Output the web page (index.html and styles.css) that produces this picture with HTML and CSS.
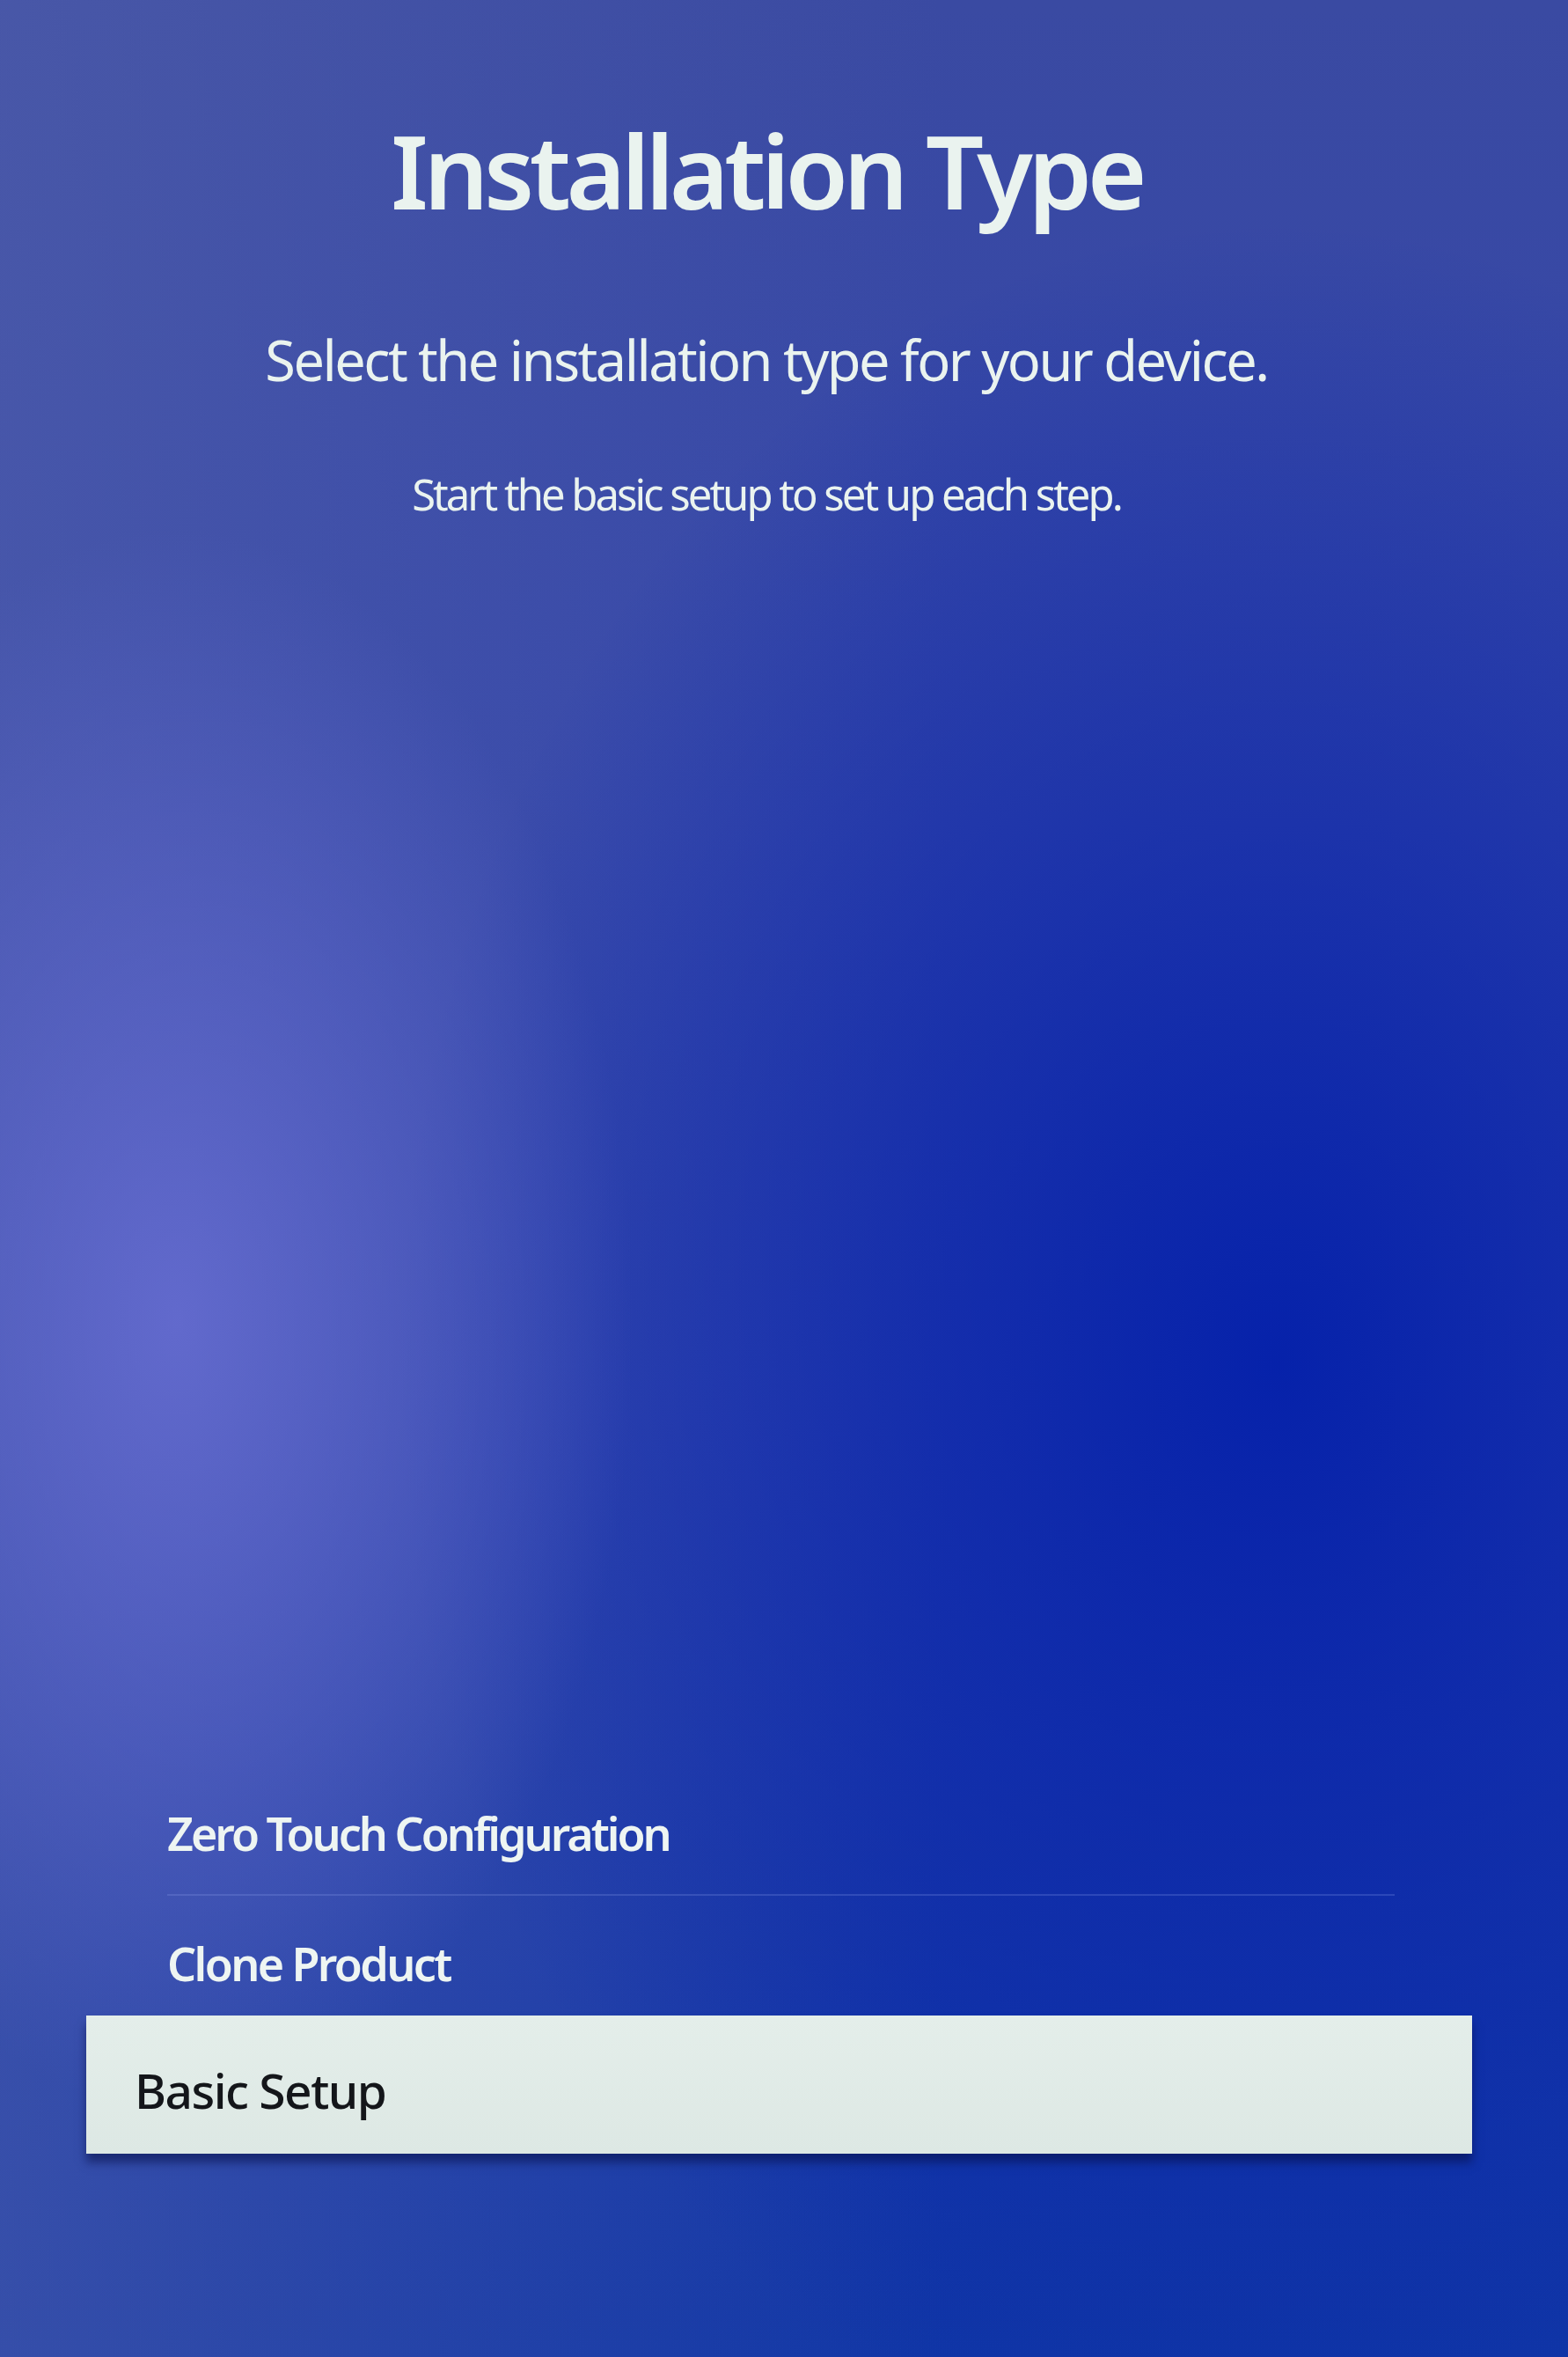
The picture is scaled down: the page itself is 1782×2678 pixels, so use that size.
FILE: index.html
```html
<!DOCTYPE html>
<html lang="en">
<head>
<meta charset="utf-8">
<title>Installation Type</title>
<link rel="stylesheet" href="styles.css">
</head>
<body>
<main class="screen">
  <header class="intro">
    <h1 class="title">Installation Type</h1>
    <p class="subtitle">Select the installation type for your device.</p>
    <p class="hint">Start the basic setup to set up each step.</p>
  </header>
  <nav class="menu">
    <div class="item item-first">Zero Touch Configuration</div>
    <div class="item item-second">Clone Product</div>
    <div class="item-selected">Basic Setup</div>
  </nav>
</main>
</body>
</html>
```
FILE: styles.css
```css
html, body {
  margin: 0;
  padding: 0;
}
body {
  width: 1782px;
  height: 2678px;
  overflow: hidden;
  font-family: "Noto Sans", "Open Sans", sans-serif;
}
.screen {
  box-sizing: border-box;
  width: 1782px;
  height: 2678px;
  display: flex;
  flex-direction: column;
  padding-bottom: 231px;
  background:
    radial-gradient(ellipse 520px 900px at 200px 1500px, rgba(104,110,210,0.85), rgba(104,110,210,0) 100%),
    radial-gradient(ellipse 1000px 1300px at 1450px 1550px, rgba(4,32,170,0.95), rgba(4,32,170,0) 100%),
    linear-gradient(90deg, rgba(84,98,172,0.55) 0%, rgba(84,98,172,0) 60%),
    linear-gradient(180deg, #3a4aa2 0%, #3446aa 35%, #2a40ae 60%, #1638a8 85%, #1036a6 100%);
}
.intro {
  padding-top: 112px;
  padding-right: 40px;
  text-align: center;
  color: #eaf3ef;
}
.title {
  margin: 0;
  font-size: 116px;
  line-height: 162px;
  font-weight: 600;
  letter-spacing: -5.4px;
}
.subtitle {
  margin: 92px 0 0;
  font-size: 63px;
  line-height: 86px;
  font-weight: 400;
  letter-spacing: -2.5px;
}
.hint {
  margin: 76px 0 0;
  font-size: 49px;
  line-height: 67px;
  font-weight: 400;
  letter-spacing: -3px;
}
.menu {
  margin-top: auto;
  display: flex;
  flex-direction: column;
}
.item {
  margin: 0 197px 0 190px;
  font-size: 52px;
  line-height: 76px;
  font-weight: 600;
  color: #eef5f2;
  letter-spacing: -3px;
}
.item-first {
  padding: 5px 0 31px;
  border-bottom: 2px solid rgba(150,170,240,0.22);
}
.item-second {
  padding: 39px 0 21px;
  letter-spacing: -2.6px;
}
.item-selected {
  margin: 0 109px 0 98px;
  height: 157px;
  box-sizing: border-box;
  padding: 47px 0 0 55px;
  font-size: 55px;
  line-height: 76px;
  font-weight: 500;
  letter-spacing: -1.5px;
  color: #14161a;
  background: linear-gradient(180deg, #e4eeea 0%, #dde8e4 100%);
  box-shadow: 0 10px 10px rgba(8,14,70,0.55);
}
```
